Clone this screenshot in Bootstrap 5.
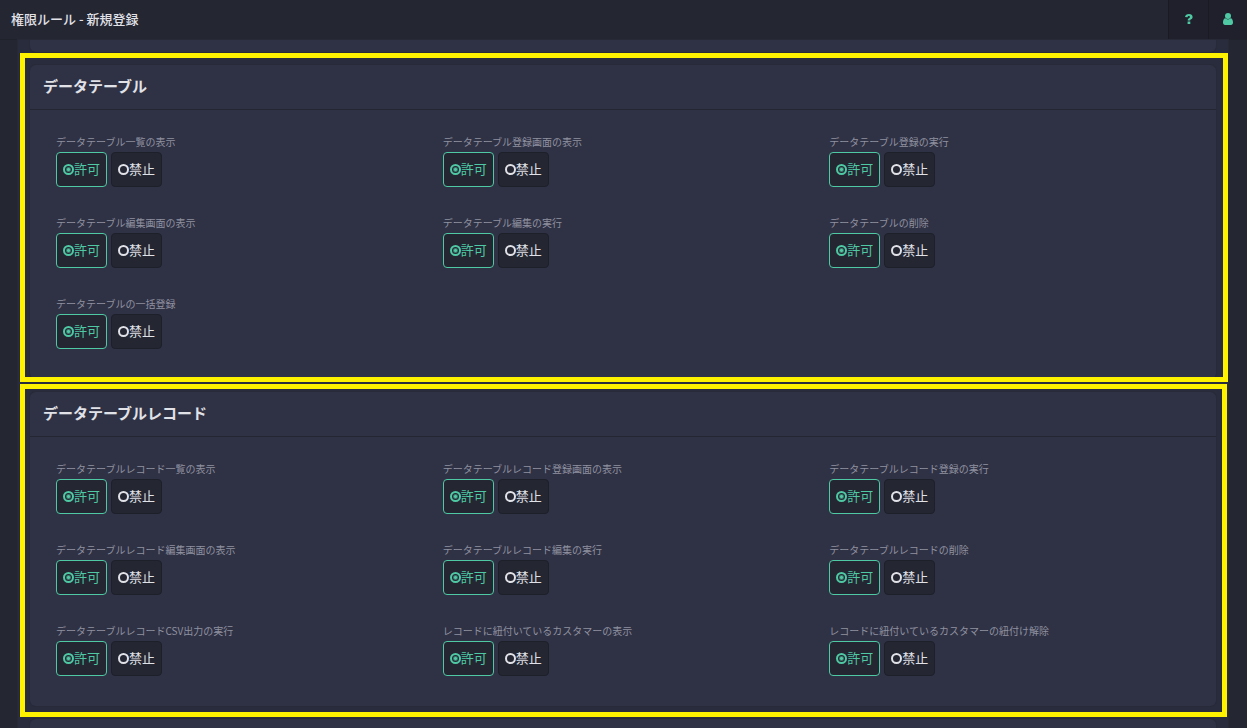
<!DOCTYPE html>
<html lang="ja">
<head>
<meta charset="utf-8">
<meta name="viewport" content="width=device-width, initial-scale=1">
<title>権限ルール - 新規登録</title>
<link href="https://cdn.jsdelivr.net/npm/bootstrap@5.3.0/dist/css/bootstrap.min.css" rel="stylesheet">
<style>
body{background:#242632;color:#e1e2e8;font:13px/20px "Noto Sans CJK JP",sans-serif}
.topbar{height:40px;background:#242632;border-bottom:1px solid #1f212b}
.topbar h1{font-size:13px;line-height:20px;padding:0 0 2px 11px}
.topbar a{width:40px;background:#1f202b;border-left:1px solid #191a24;color:#4fc9a4}
.topbar a:last-child{width:39px}
.topbar svg{fill:currentColor;margin-bottom:2px}
.page-panel{margin:0 19px 0 18px;padding:0 12px;background:#292c3c;box-shadow:0 0 0 1px #272937}
.rule-card{background:#2f3245;border:0;border-radius:6px;color:inherit;box-shadow:0 0 0 1px #282a39;margin-bottom:13px}
.rule-card .card-header{height:45px;padding:0 13px 2px;border-bottom:1px solid #242632;background:none}
.rule-card h2{font-size:15px;line-height:20px;font-weight:700}
.rule-card .card-body{padding:24px 13px 2px}
.rule-card .row{--bs-gutter-x:26px;margin:0}
.rule-end{height:12px;border-radius:0 0 6px 6px}
.rule-start{height:60px}
.rule-field{margin-bottom:28px}
.rule-field legend{font-size:10px;line-height:16px;color:#8f91a0;margin-bottom:2px;float:none}
.choice{display:inline-flex;align-items:center;height:35px;padding:0 6px 2px;border:1px solid #1d1f29;border-radius:4px;background:#242632;color:#e1e2e8;font-size:13px;line-height:20px}
.choice:hover{color:#fff;background:#242632}
.choice input{appearance:none;flex:none;color:inherit;width:11px;height:11px;margin:2px 0 0;border:2px solid currentColor;border-radius:50%;background:none}
.choice:has(input:checked){color:#4fc9a4;border-color:#4fc9a4}
.choice input:checked{background:radial-gradient(circle,currentColor 0 1px,transparent 3px)}
.marker{position:absolute;border:5px solid #fff200;pointer-events:none}
.marker-table{inset:-12px -12px -3px -10px}
.marker-record{inset:-8px -11px -11px -10px}
</style>
</head>
<body>
<div class="vh-100 d-flex flex-column overflow-hidden">
<header class="topbar d-flex align-items-stretch flex-shrink-0">
<h1 class="m-0 me-auto align-self-center">権限ルール - 新規登録</h1>
<a href="#" class="d-flex align-items-center justify-content-center" aria-label="ヘルプ"><svg width="8" height="10" viewBox="0 0 8 10"><path d="M0 2.9C.3 1 1.7 0 4 0c2.200 0 3.600 1 3.600 2.900 0 1.300-.7 1.900-1.500 2.400-.7.4-.9.600-.9 1.200H2.700c0-1.500.6-2 1.400-2.500.7-.4.900-.600.900-1.100 0-.6-.4-.9-1.100-.9-.8 0-1.200.4-1.400 1.200zM2.600 7.400h2.700V10H2.600z"/></svg></a>
<a href="#" class="d-flex align-items-center justify-content-center" aria-label="ユーザー"><svg width="10" height="12" viewBox="0 0 10 12"><circle cx="5" cy="3" r="3"/><path d="M2.200 5C.7 5.600 0 7.300 0 9.600 0 11 .8 12 2 12h6c1.200 0 2-1 2-2.400C10 7.300 9.300 5.600 7.800 5 7 6 6.100 6.400 5 6.400S3 6 2.200 5z"/></svg></a>
</header>
<main class="page-panel flex-grow-1 overflow-hidden">
<section class="card rule-card rule-end"></section>

<section class="card rule-card">
<div class="card-header d-flex align-items-center"><h2 class="m-0">データテーブル</h2></div>
<div class="card-body"><div class="row row-cols-3">
<fieldset class="col rule-field"><legend>データテーブル一覧の表示</legend><div class="d-flex gap-1"><label class="btn choice"><input type="radio" name="t1" checked>許可</label><label class="btn choice"><input type="radio" name="t1">禁止</label></div></fieldset>
<fieldset class="col rule-field"><legend>データテーブル登録画面の表示</legend><div class="d-flex gap-1"><label class="btn choice"><input type="radio" name="t2" checked>許可</label><label class="btn choice"><input type="radio" name="t2">禁止</label></div></fieldset>
<fieldset class="col rule-field"><legend>データテーブル登録の実行</legend><div class="d-flex gap-1"><label class="btn choice"><input type="radio" name="t3" checked>許可</label><label class="btn choice"><input type="radio" name="t3">禁止</label></div></fieldset>
<fieldset class="col rule-field"><legend>データテーブル編集画面の表示</legend><div class="d-flex gap-1"><label class="btn choice"><input type="radio" name="t4" checked>許可</label><label class="btn choice"><input type="radio" name="t4">禁止</label></div></fieldset>
<fieldset class="col rule-field"><legend>データテーブル編集の実行</legend><div class="d-flex gap-1"><label class="btn choice"><input type="radio" name="t5" checked>許可</label><label class="btn choice"><input type="radio" name="t5">禁止</label></div></fieldset>
<fieldset class="col rule-field"><legend>データテーブルの削除</legend><div class="d-flex gap-1"><label class="btn choice"><input type="radio" name="t6" checked>許可</label><label class="btn choice"><input type="radio" name="t6">禁止</label></div></fieldset>
<fieldset class="col rule-field"><legend>データテーブルの一括登録</legend><div class="d-flex gap-1"><label class="btn choice"><input type="radio" name="t7" checked>許可</label><label class="btn choice"><input type="radio" name="t7">禁止</label></div></fieldset>
</div></div>
<div class="marker marker-table"></div>
</section>

<section class="card rule-card">
<div class="card-header d-flex align-items-center"><h2 class="m-0">データテーブルレコード</h2></div>
<div class="card-body"><div class="row row-cols-3">
<fieldset class="col rule-field"><legend>データテーブルレコード一覧の表示</legend><div class="d-flex gap-1"><label class="btn choice"><input type="radio" name="r1" checked>許可</label><label class="btn choice"><input type="radio" name="r1">禁止</label></div></fieldset>
<fieldset class="col rule-field"><legend>データテーブルレコード登録画面の表示</legend><div class="d-flex gap-1"><label class="btn choice"><input type="radio" name="r2" checked>許可</label><label class="btn choice"><input type="radio" name="r2">禁止</label></div></fieldset>
<fieldset class="col rule-field"><legend>データテーブルレコード登録の実行</legend><div class="d-flex gap-1"><label class="btn choice"><input type="radio" name="r3" checked>許可</label><label class="btn choice"><input type="radio" name="r3">禁止</label></div></fieldset>
<fieldset class="col rule-field"><legend>データテーブルレコード編集画面の表示</legend><div class="d-flex gap-1"><label class="btn choice"><input type="radio" name="r4" checked>許可</label><label class="btn choice"><input type="radio" name="r4">禁止</label></div></fieldset>
<fieldset class="col rule-field"><legend>データテーブルレコード編集の実行</legend><div class="d-flex gap-1"><label class="btn choice"><input type="radio" name="r5" checked>許可</label><label class="btn choice"><input type="radio" name="r5">禁止</label></div></fieldset>
<fieldset class="col rule-field"><legend>データテーブルレコードの削除</legend><div class="d-flex gap-1"><label class="btn choice"><input type="radio" name="r6" checked>許可</label><label class="btn choice"><input type="radio" name="r6">禁止</label></div></fieldset>
<fieldset class="col rule-field"><legend>データテーブルレコードCSV出力の実行</legend><div class="d-flex gap-1"><label class="btn choice"><input type="radio" name="r7" checked>許可</label><label class="btn choice"><input type="radio" name="r7">禁止</label></div></fieldset>
<fieldset class="col rule-field"><legend>レコードに紐付いているカスタマーの表示</legend><div class="d-flex gap-1"><label class="btn choice"><input type="radio" name="r8" checked>許可</label><label class="btn choice"><input type="radio" name="r8">禁止</label></div></fieldset>
<fieldset class="col rule-field"><legend>レコードに紐付いているカスタマーの紐付け解除</legend><div class="d-flex gap-1"><label class="btn choice"><input type="radio" name="r9" checked>許可</label><label class="btn choice"><input type="radio" name="r9">禁止</label></div></fieldset>
</div></div>
<div class="marker marker-record"></div>
</section>

<section class="card rule-card rule-start"></section>
</main>
</div>
<script src="https://cdn.jsdelivr.net/npm/bootstrap@5.3.0/dist/js/bootstrap.bundle.min.js"></script>
</body>
</html>
